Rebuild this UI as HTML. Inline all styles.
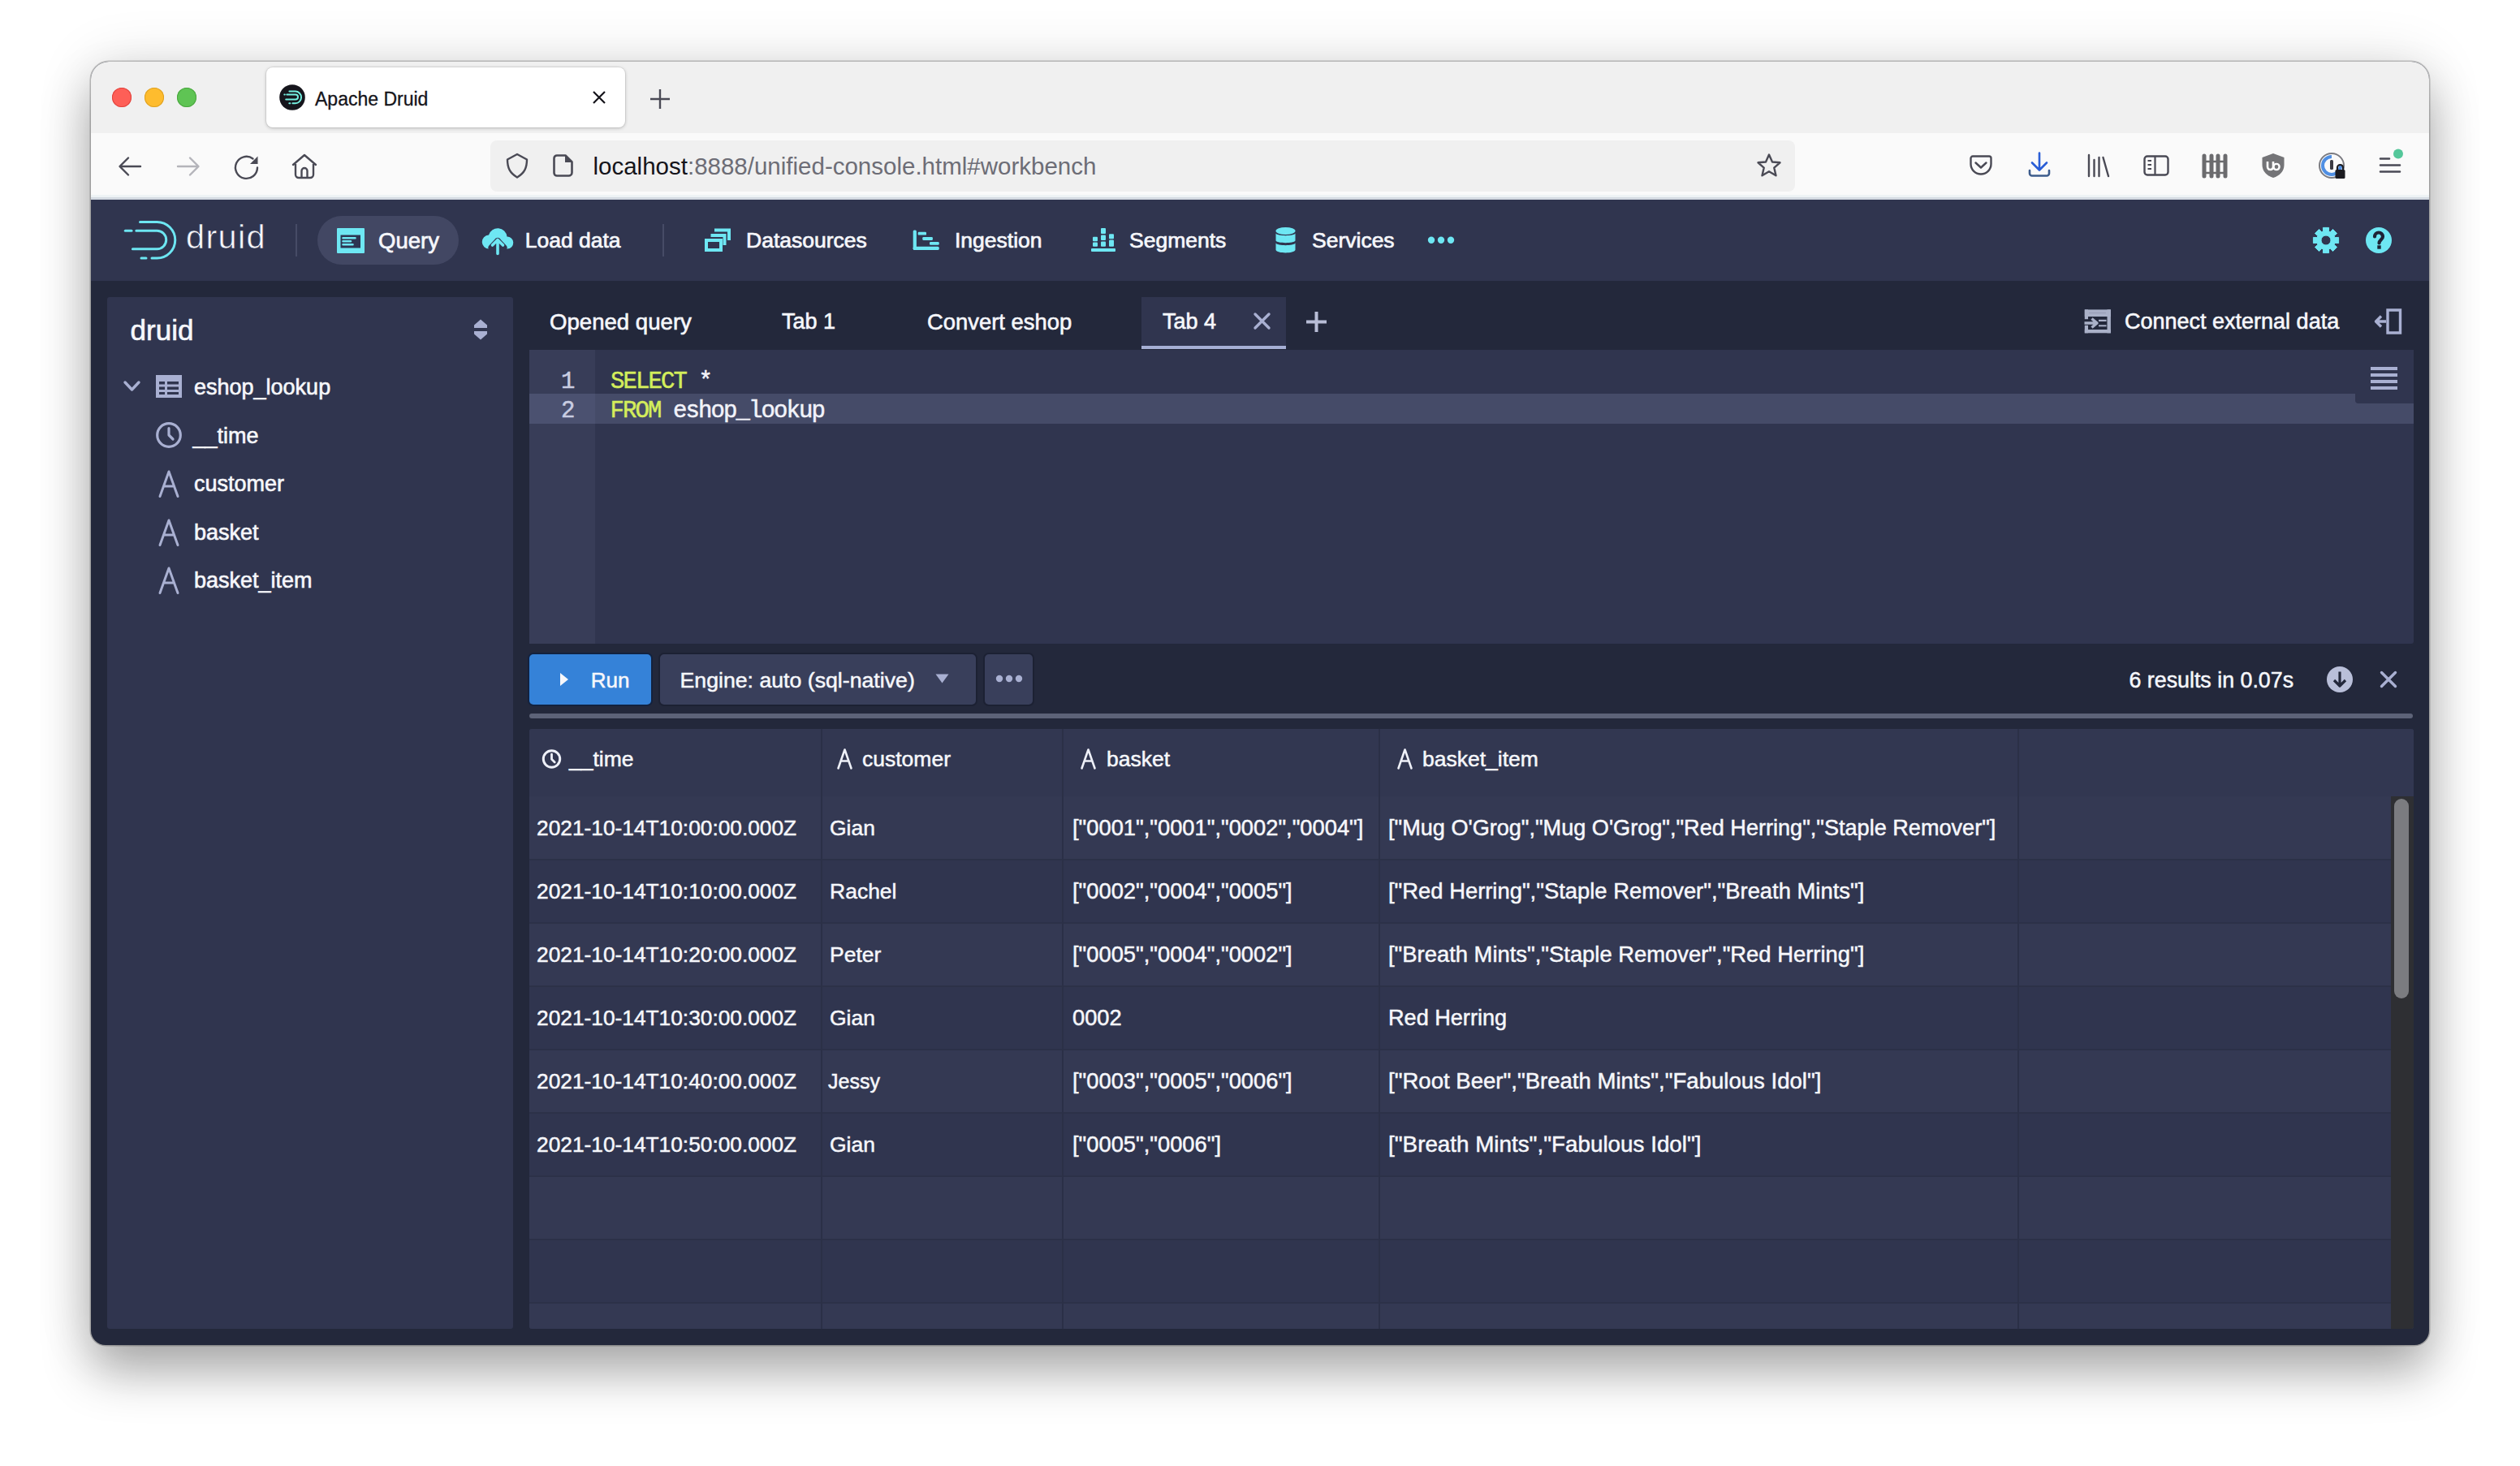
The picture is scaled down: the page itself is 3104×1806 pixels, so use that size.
<!DOCTYPE html>
<html><head><meta charset="utf-8">
<style>
*{box-sizing:border-box;margin:0;padding:0}
html,body{width:3104px;height:1806px;overflow:hidden;background:#ffffff;font-family:"Liberation Sans",sans-serif}
.a{position:absolute}
.t{position:absolute;white-space:nowrap;line-height:1}
svg{position:absolute;overflow:visible}
#win{left:112px;top:76px;width:2880px;height:1581px;border-radius:22px 22px 18px 18px;background:#23283b;overflow:hidden;
 box-shadow:0 0 0 1.5px rgba(0,0,0,.22),0 34px 60px rgba(0,0,0,.30),0 0 70px rgba(0,0,0,.12)}
.nav{font-size:26.5px;color:#f6f7fb;-webkit-text-stroke:0.7px #f6f7fb}
.tab{font-size:27px;color:#f6f7fb;-webkit-text-stroke:0.6px #f6f7fb}
.side{font-size:27px;color:#f6f7fb;-webkit-text-stroke:0.6px #f6f7fb}
.cell{font-size:26.5px;color:#f6f7fb;-webkit-text-stroke:0.5px #f6f7fb}
.mono{font-family:"Liberation Mono",monospace}
</style></head><body>
<div id="win" class="a">
  <div class="a" style="left:0;top:0;width:2880px;height:88px;background:#f0f0f0"></div>
  <div class="a" style="left:0;top:88px;width:2880px;height:80px;background:#fafafa"></div>
  <div class="a" style="left:0;top:164px;width:2880px;height:3px;background:#eef3f5"></div>
  <div class="a" style="left:0;top:167px;width:2880px;height:3px;background:#d4dae2"></div>
  <div class="a" style="left:0;top:170px;width:2880px;height:100px;background:#30354f"></div>
  <div class="a" style="left:20px;top:290px;width:500px;height:1271px;background:#30354f;border-radius:3px"></div>
  <div class="a" style="left:1294px;top:290px;width:178px;height:64px;background:#30354f"></div>
  <div class="a" style="left:1294px;top:350px;width:178px;height:4px;background:#a6afd4"></div>
  <div class="a" style="left:540px;top:355px;width:2321px;height:362px;background:#30354f;border-radius:3px"></div>
  <div class="a" style="left:540px;top:355px;width:81px;height:362px;background:#383d58"></div>
  <div class="a" style="left:540px;top:409px;width:2321px;height:37px;background:#454b68"></div>
  <div class="a" style="left:540px;top:409px;width:81px;height:37px;background:#4b5170"></div>
  <div class="a" style="left:2789px;top:355px;width:72px;height:66px;background:#30354f;border-radius:0 0 0 4px"></div>
  <div class="a" style="left:540px;top:730px;width:150px;height:62px;background:#3582d8;border-radius:5px;box-shadow:0 0 0 2px #13223f"></div>
  <div class="a" style="left:701px;top:730px;width:389px;height:62px;background:#393f5b;border-radius:5px;box-shadow:0 0 0 2px #1c2133"></div>
  <div class="a" style="left:1101px;top:730px;width:59px;height:62px;background:#393f5b;border-radius:5px;box-shadow:0 0 0 2px #1c2133"></div>
  <div class="a" style="left:540px;top:803px;width:2320px;height:6px;background:#5d6378;border-radius:3px"></div>
  <div class="a" style="left:540px;top:822px;width:2321px;height:739px;background:#30354f;border-radius:3px;overflow:hidden">
    <div class="a" style="left:0;top:0;width:2321px;height:83px;background:#323751"></div>
    <div class="a" style="left:0;top:83px;width:2321px;height:77px;background:#343953"></div>
    <div class="a" style="left:0;top:238px;width:2321px;height:78px;background:#343953"></div>
    <div class="a" style="left:0;top:394px;width:2321px;height:78px;background:#343953"></div>
    <div class="a" style="left:0;top:550px;width:2321px;height:78px;background:#343953"></div>
    <div class="a" style="left:0;top:706px;width:2321px;height:78px;background:#343953"></div>
    <div class="a" style="left:0;top:160px;width:2321px;height:2px;background:#2c3148"></div>
    <div class="a" style="left:0;top:238px;width:2321px;height:2px;background:#2c3148"></div>
    <div class="a" style="left:0;top:316px;width:2321px;height:2px;background:#2c3148"></div>
    <div class="a" style="left:0;top:394px;width:2321px;height:2px;background:#2c3148"></div>
    <div class="a" style="left:0;top:472px;width:2321px;height:2px;background:#2c3148"></div>
    <div class="a" style="left:0;top:550px;width:2321px;height:2px;background:#2c3148"></div>
    <div class="a" style="left:0;top:628px;width:2321px;height:2px;background:#2c3148"></div>
    <div class="a" style="left:0;top:706px;width:2321px;height:2px;background:#2c3148"></div>
    <div class="a" style="left:359px;top:0;width:2px;height:739px;background:#2b3047"></div>
    <div class="a" style="left:656px;top:0;width:2px;height:739px;background:#2b3047"></div>
    <div class="a" style="left:1046px;top:0;width:2px;height:739px;background:#2b3047"></div>
    <div class="a" style="left:1833px;top:0;width:2px;height:739px;background:#2b3047"></div>
    <div class="a" style="left:2293px;top:83px;width:28px;height:656px;background:#2e2f33"></div>
    <div class="a" style="left:2297px;top:86px;width:18px;height:246px;background:#7b7c80;border-radius:9px"></div>
  </div>
</div>
<!-- ===== Browser chrome ===== -->
<div class="a" style="left:137.6px;top:107.7px;width:24px;height:24px;border-radius:50%;background:#fe5f57;box-shadow:inset 0 0 0 1px #e0443e"></div>
<div class="a" style="left:177.8px;top:107.7px;width:24px;height:24px;border-radius:50%;background:#febc2e;box-shadow:inset 0 0 0 1px #dea123"></div>
<div class="a" style="left:217.5px;top:107.7px;width:24px;height:24px;border-radius:50%;background:#5fc454;box-shadow:inset 0 0 0 1px #4aa63f"></div>

<div class="a" style="left:328px;top:83px;width:442px;height:74px;border-radius:8px;background:#fff;box-shadow:0 0 0 1px rgba(0,0,0,.06),0 1px 4px rgba(0,0,0,.22)"></div>
<svg style="left:344px;top:104px" width="32" height="32" viewBox="0 0 32 32">
  <circle cx="16" cy="16" r="15.8" fill="#16151c"/>
  <g fill="none" stroke="#74eedf" stroke-width="2" stroke-linecap="round">
  <path d="M12.4 8.6H19.7A7.35 7.35 0 0 1 19.7 23.3H16.4M12.3 23.3H13.3"/>
  <path d="M9.3 12.6H20A3 3 0 0 1 20 18.6H8.2"/>
  <path d="M6.3 12.6H6.8"/>
  </g>
</svg>
<div class="t" style="left:388px;top:110.5px;font-size:23px;color:#15141a;-webkit-text-stroke:0.3px #15141a">Apache Druid</div>
<svg style="left:730px;top:112px" width="16" height="16"><path d="M1 1L15 15M15 1L1 15" stroke="#15141a" stroke-width="2.2"/></svg>
<svg style="left:801px;top:110px" width="24" height="24"><path d="M12 0V24M0 12H24" stroke="#4a4a55" stroke-width="2.4"/></svg>

<!-- nav buttons -->
<svg style="left:146px;top:193px" width="28" height="24" viewBox="0 0 28 24"><path d="M27 12H2M12 1.5L1.5 12L12 22.5" fill="none" stroke="#4a4a55" stroke-width="2.4" stroke-linecap="round" stroke-linejoin="round"/></svg>
<svg style="left:218px;top:193px" width="28" height="24" viewBox="0 0 28 24"><path d="M1 12H26M16 1.5L26.5 12L16 22.5" fill="none" stroke="#b4b4ba" stroke-width="2.4" stroke-linecap="round" stroke-linejoin="round"/></svg>
<svg style="left:289px;top:191px" width="30" height="30" viewBox="0 0 30 30"><path d="M28 15.5A13.5 13.5 0 1 1 22.5 4.5" fill="none" stroke="#4a4a55" stroke-width="2.4" stroke-linecap="round"/><path d="M28.5 1.5V11H19Z" fill="#4a4a55"/></svg>
<svg style="left:359px;top:189px" width="32" height="32" viewBox="0 0 32 32"><path d="M2 14L16 2L30 14M5 11.5V26A4 4 0 0 0 9 30H23A4 4 0 0 0 27 26V11.5M12.5 30V21.5A3.5 3.5 0 0 1 19.5 21.5V30" fill="none" stroke="#4a4a55" stroke-width="2.4" stroke-linejoin="round" stroke-linecap="round"/></svg>

<!-- url bar -->
<div class="a" style="left:604px;top:173px;width:1607px;height:63px;border-radius:8px;background:#f0f0f0"></div>
<svg style="left:622px;top:188px" width="30" height="32" viewBox="0 0 30 32"><path d="M15 2L3 8.5C3 19 6 25 15 30.5C24 25 27 19 27 8.5Z" fill="none" stroke="#4a4a55" stroke-width="2.4" stroke-linejoin="round"/></svg>
<svg style="left:681px;top:190px" width="25" height="28" viewBox="0 0 25 28"><path d="M5 1.5H15.5L23.5 9.5V22.5A4 4 0 0 1 19.5 26.5H5A3.5 3.5 0 0 1 1.5 23V5A3.5 3.5 0 0 1 5 1.5Z" fill="none" stroke="#4a4a55" stroke-width="2.6" stroke-linejoin="round"/><path d="M15 1.5V10H23.5Z" fill="#4a4a55"/></svg>
<div class="t" style="left:730.5px;top:190px;font-size:29.5px;color:#15141a">localhost<span style="color:#6d6d76">:8888/unified-console.html#workbench</span></div>
<svg style="left:2163px;top:188px" width="32" height="32" viewBox="0 0 32 32"><path d="M16 2.5L20 11.5L29.5 12.3L22.3 18.7L24.5 28.3L16 23.2L7.5 28.3L9.7 18.7L2.5 12.3L12 11.5Z" fill="none" stroke="#4a4a55" stroke-width="2.4" stroke-linejoin="round"/></svg>

<!-- right toolbar icons -->
<svg style="left:2426px;top:191px" width="28" height="27" viewBox="0 0 28 27"><path d="M4 1.5H24A2.5 2.5 0 0 1 26.5 4V11A12.5 12.5 0 0 1 1.5 11V4A2.5 2.5 0 0 1 4 1.5Z" fill="none" stroke="#4a4a55" stroke-width="2.4"/><path d="M7.5 9.5L14 15.5L20.5 9.5" fill="none" stroke="#4a4a55" stroke-width="2.4" stroke-linecap="round" stroke-linejoin="round"/></svg>
<svg style="left:2498px;top:187px" width="28" height="32" viewBox="0 0 28 32"><path d="M14 1.5V22M5 13.5L14 22.5L23 13.5" fill="none" stroke="#2a5ed6" stroke-width="2.6" stroke-linecap="round" stroke-linejoin="round"/><path d="M2 23V26.5A3 3 0 0 0 5 29.5H23A3 3 0 0 0 26 26.5V23" fill="none" stroke="#3d5c8c" stroke-width="2.6" stroke-linecap="round"/></svg>
<svg style="left:2571px;top:189px" width="28" height="30" viewBox="0 0 28 30"><path d="M2 2V28M8.5 8V28M14.5 5V28M19.5 5L26 28" fill="none" stroke="#4a4a55" stroke-width="2.4" stroke-linecap="round"/></svg>
<svg style="left:2640px;top:191px" width="32" height="26" viewBox="0 0 32 26"><rect x="1.5" y="1.5" width="29" height="23" rx="3.5" fill="none" stroke="#4a4a55" stroke-width="2.4"/><path d="M14.5 1.5V24.5M5.5 7H10M5.5 12H10M5.5 17H10" fill="none" stroke="#4a4a55" stroke-width="2.2"/></svg>
<svg style="left:2711px;top:189px" width="34" height="30" viewBox="0 0 34 30"><path d="M4 3V28M13 3V28M21 3V28M30 3V28" stroke="#6b6b6e" stroke-width="5" stroke-linecap="round"/><path d="M2 10H32M2 24H32" stroke="#6b6b6e" stroke-width="2.5"/></svg>
<svg style="left:2785px;top:188px" width="30" height="32" viewBox="0 0 30 32"><path d="M15 1L1.5 6V15C1.5 23 7 28.5 15 31C23 28.5 28.5 23 28.5 15V6Z" fill="#747477"/><path d="M8 11V17.5A3.5 3.5 0 0 0 15 17.5V11" fill="none" stroke="#fff" stroke-width="2.6"/><circle cx="19" cy="17.5" r="3.6" fill="none" stroke="#fff" stroke-width="2.4"/></svg>
<svg style="left:2855px;top:187px" width="34" height="34" viewBox="0 0 34 34"><circle cx="17" cy="17" r="15" fill="none" stroke="#7b7b80" stroke-width="2"/><path d="M17 6A11 11 0 1 0 28 17" fill="none" stroke="#4f8fe3" stroke-width="4"/><rect x="15" y="10" width="4" height="12" rx="1.5" fill="#3b3b44"/><rect x="21.5" y="22" width="12" height="11" rx="1.5" fill="#1b1b20"/><path d="M24 22V19.5A3.5 3.5 0 0 1 31 19.5V22" fill="none" stroke="#1b1b20" stroke-width="2.2"/></svg>
<svg style="left:2930px;top:183px" width="34" height="34" viewBox="0 0 34 34"><path d="M2 12.5H13M2 20.5H26M2 28.5H26" stroke="#4a4a55" stroke-width="2.6" stroke-linecap="round"/><circle cx="24" cy="6.5" r="6" fill="#54c79a"/></svg>
<!-- ===== Druid header ===== -->
<svg style="left:140px;top:260px" width="90" height="70" viewBox="0 0 90 70">
  <g fill="none" stroke="#6de6f2" stroke-width="3" stroke-linecap="round">
    <path d="M32.5 13.5H53.5A22.25 22.25 0 0 1 53.5 58H47"/>
    <path d="M34 58H40"/>
    <path d="M27.8 24.2H53.4A11.3 11.3 0 0 1 53.4 46.8H23.4"/>
    <path d="M14.3 24.2H22"/>
  </g>
</svg>
<div class="t" style="left:229px;top:270.8px;font-size:41.5px;color:#f6f7fb;letter-spacing:1.3px;-webkit-text-stroke:0.6px #30354f">druid</div>
<div class="a" style="left:364px;top:276px;width:2px;height:40px;background:#464b66"></div>
<div class="a" style="left:391px;top:266px;width:174px;height:60px;border-radius:30px;background:#424763"></div>
<svg style="left:415px;top:281px" width="34" height="31" viewBox="0 0 34 31"><rect x="4" y="8" width="25.5" height="17" fill="#2c3552"/><path fill="#6ee7f3" fill-rule="evenodd" d="M1 0H33A1 1 0 0 1 34 1V30A1 1 0 0 1 33 31H1A1 1 0 0 1 0 30V1A1 1 0 0 1 1 0ZM4.5 8.5V24.5H29V8.5Z"/><path d="M7.5 12.3H22.5M7.5 16.3H17M7.5 20.3H19.5" stroke="#6ee7f3" stroke-width="2.6" stroke-linecap="round"/></svg>
<div class="t nav" style="left:466px;top:283px;font-size:27.5px">Query</div>
<svg style="left:594px;top:279px" width="38" height="35" viewBox="0 0 38 35"><path fill="#6ee7f3" d="M30.5 12.5A11.5 11.5 0 0 0 8 10.5A8.5 8.5 0 0 0 8.5 27.5H31A7.5 7.5 0 0 0 30.5 12.5Z"/><path d="M19 34V18M11.5 26L19 18L26.5 26" fill="none" stroke="#30354f" stroke-width="8" stroke-linecap="round" stroke-linejoin="round"/><path d="M19 33.5V16.5M12.5 23L19 16.5L25.5 23" fill="none" stroke="#6ee7f3" stroke-width="3.6" stroke-linecap="round" stroke-linejoin="round"/></svg>
<div class="t nav" style="left:646.7px;top:283px">Load data</div>
<div class="a" style="left:816px;top:276px;width:2px;height:40px;background:#464b66"></div>
<svg style="left:866px;top:280px" width="36" height="30" viewBox="0 0 36 30"><g fill="none" stroke="#6ee7f3" stroke-width="4"><path d="M14 3.5H32V16"/><path d="M9.5 10H26.5V22"/><rect x="4" y="16" width="18" height="12"/></g></svg>
<div class="t nav" style="left:919px;top:283px">Datasources</div>
<svg style="left:1122px;top:281px" width="38" height="30" viewBox="0 0 38 30"><g fill="#6ee7f3"><rect x="2.7" y="2.6" width="4.2" height="24.2" rx="1.5"/><rect x="2.7" y="22.7" width="32" height="4.2" rx="1.5"/><rect x="8.7" y="4.8" width="10.3" height="3.8" rx="1.2"/><rect x="14.3" y="11" width="12.6" height="3.9" rx="1.2"/><rect x="23" y="17" width="11.7" height="3.8" rx="1.2"/></g></svg>
<div class="t nav" style="left:1176px;top:283px">Ingestion</div>
<svg style="left:1342px;top:279px" width="34" height="34" viewBox="0 0 34 34"><g fill="#6ee7f3"><rect x="2" y="27" width="30" height="4" rx="1"/><rect x="4" y="12.8" width="6" height="5.5" rx="1"/><rect x="4" y="19.5" width="6" height="5.2" rx="1"/><rect x="14" y="2" width="6" height="7" rx="1"/><rect x="14" y="10.5" width="6" height="6.5" rx="1"/><rect x="14" y="18.5" width="6" height="6.2" rx="1"/><rect x="24" y="9.3" width="6" height="6" rx="1"/><rect x="24" y="16.5" width="6" height="8.2" rx="1"/></g></svg>
<div class="t nav" style="left:1391px;top:283px">Segments</div>
<svg style="left:1570px;top:279px" width="27" height="34" viewBox="0 0 27 34"><g fill="#6ee7f3"><ellipse cx="13.5" cy="5.5" rx="12" ry="4.5"/><path d="M1.5 8.5C3 12 24 12 25.5 8.5V17.5C24 21 3 21 1.5 17.5Z"/><path d="M1.5 20.5C3 24 24 24 25.5 20.5V29C24 33.5 3 33.5 1.5 29Z"/></g></svg>
<div class="t nav" style="left:1616px;top:283px">Services</div>
<svg style="left:1756px;top:288px" width="36" height="16" viewBox="0 0 36 16"><g fill="#6ee7f3"><circle cx="7" cy="7.7" r="4.2"/><circle cx="19" cy="7.7" r="4.2"/><circle cx="31" cy="7.7" r="4.2"/></g></svg>
<svg style="left:2848px;top:279px" width="34" height="34" viewBox="0 0 34 34"><path fill="#6ee7f3" fill-rule="evenodd" stroke="#6ee7f3" stroke-width="1" stroke-linejoin="round" d="M13.64 6.00 L13.40 1.41 L20.60 1.41 L20.36 6.00 L22.40 6.85 L25.48 3.43 L30.57 8.52 L27.15 11.60 L28.00 13.64 L32.59 13.40 L32.59 20.60 L28.00 20.36 L27.15 22.40 L30.57 25.48 L25.48 30.57 L22.40 27.15 L20.36 28.00 L20.60 32.59 L13.40 32.59 L13.64 28.00 L11.60 27.15 L8.52 30.57 L3.43 25.48 L6.85 22.40 L6.00 20.36 L1.41 20.60 L1.41 13.40 L6.00 13.64 L6.85 11.60 L3.43 8.52 L8.52 3.43 L11.60 6.85Z M17 11A6 6 0 1 0 17 23A6 6 0 1 0 17 11Z"/></svg>
<svg style="left:2914px;top:280px" width="32" height="32" viewBox="0 0 32 32"><circle cx="16" cy="16" r="16" fill="#6ee7f3"/><path d="M11 11.5A5 5 0 0 1 21 11.5C21 15 16.5 15.5 16.5 19.5" fill="none" stroke="#1e2336" stroke-width="4.2" stroke-linecap="round"/><rect x="14.3" y="22.3" width="4.4" height="4.4" fill="#1e2336"/></svg>

<!-- ===== Sidebar ===== -->
<div class="t side" style="left:160.6px;top:389px;font-size:35px">druid</div>
<svg style="left:584px;top:393px" width="16" height="26" viewBox="0 0 16 26"><path d="M8 0.5L16 7.5V11H0V7.5Z M0 15H16V18.5L8 25.5L0 18.5Z" fill="#a9b0d2"/></svg>
<svg style="left:152px;top:469px" width="21" height="14" viewBox="0 0 21 14"><path d="M2 2L10.5 11L19 2" fill="none" stroke="#a9b0d2" stroke-width="3.4" stroke-linecap="round" stroke-linejoin="round"/></svg>
<svg style="left:192px;top:462px" width="32" height="28" viewBox="0 0 32 28"><path fill="#a9b0d2" fill-rule="evenodd" d="M0 0H32V28H0ZM4 8V11.5H11V8ZM14 8V11.5H28V8ZM4 14.5V18H11V14.5ZM14 14.5V18H28V14.5ZM4 21V24H11V21ZM14 21V24H28V21Z"/></svg>
<div class="t side" style="left:239px;top:464px">eshop_lookup</div>
<svg style="left:192px;top:520px" width="32" height="32" viewBox="0 0 32 32"><circle cx="16" cy="16" r="14.3" fill="none" stroke="#a9b0d2" stroke-width="3.2"/><path d="M16 7.5V16L21 21" fill="none" stroke="#a9b0d2" stroke-width="3.2" stroke-linecap="round" stroke-linejoin="round"/></svg>
<div class="t side" style="left:237.5px;top:524px">__time</div>
<svg style="left:195px;top:579px" width="26" height="34" viewBox="0 0 26 34"><path d="M2 32.5L13 2L24 32.5M6.5 20H19.5" fill="none" stroke="#a9b0d2" stroke-width="3" stroke-linecap="round" stroke-linejoin="round"/></svg>
<div class="t side" style="left:239px;top:582.7px">customer</div>
<svg style="left:195px;top:639px" width="26" height="34" viewBox="0 0 26 34"><path d="M2 32.5L13 2L24 32.5M6.5 20H19.5" fill="none" stroke="#a9b0d2" stroke-width="3" stroke-linecap="round" stroke-linejoin="round"/></svg>
<div class="t side" style="left:239px;top:642.7px">basket</div>
<svg style="left:195px;top:698px" width="26" height="34" viewBox="0 0 26 34"><path d="M2 32.5L13 2L24 32.5M6.5 20H19.5" fill="none" stroke="#a9b0d2" stroke-width="3" stroke-linecap="round" stroke-linejoin="round"/></svg>
<div class="t side" style="left:239px;top:701.5px">basket_item</div>

<!-- ===== Tabs ===== -->
<div class="t tab" style="left:677px;top:383.2px;font-size:27.6px">Opened query</div>
<div class="t tab" style="left:963px;top:383.2px">Tab 1</div>
<div class="t tab" style="left:1142px;top:383.2px;font-size:27.4px">Convert eshop</div>
<div class="t tab" style="left:1432px;top:383.2px">Tab 4</div>
<svg style="left:1544px;top:385px" width="21" height="21" viewBox="0 0 21 21"><path d="M2 2L19 19M19 2L2 19" stroke="#a9b0d2" stroke-width="3.4" stroke-linecap="round"/></svg>
<svg style="left:1609px;top:384px" width="25" height="25" viewBox="0 0 25 25"><path d="M12.5 0V25M0 12.5H25" stroke="#b8bdd6" stroke-width="4"/></svg>
<svg style="left:2567px;top:381px" width="34" height="30" viewBox="0 0 34 30"><g fill="#aab1c8"><rect x="0.8" y="0.4" width="32.1" height="8.6"/><rect x="28.5" y="0.4" width="4.4" height="28.9"/><rect x="0.8" y="25" width="32.1" height="4.3"/><rect x="0.8" y="0.4" width="4.2" height="11.8"/><rect x="0.8" y="19.8" width="4.2" height="9.5"/><rect x="18" y="12.8" width="9.5" height="2.2"/><rect x="18" y="19.3" width="9.5" height="2"/></g><path d="M0.5 17H13.5M9.5 11.5L16 17L9.5 22.5" fill="none" stroke="#aab1c8" stroke-width="3.4" stroke-linejoin="round"/><rect x="6" y="3.8" width="21" height="1.4" fill="#9aa1b8"/></svg>
<div class="t tab" style="left:2617px;top:383.4px">Connect external data</div>
<svg style="left:2925px;top:380px" width="34" height="32" viewBox="0 0 34 32"><path d="M16 2H31.5V30H16Z" fill="none" stroke="#a9b0d2" stroke-width="3.4"/><path d="M2 16H14M8 9.5L1.5 16L8 22.5" fill="none" stroke="#a9b0d2" stroke-width="3.4" stroke-linejoin="round"/></svg>

<!-- ===== Editor ===== -->
<div class="t mono" style="left:691px;top:455.5px;font-size:29px;color:#c9cde2;letter-spacing:-1.9px;-webkit-text-stroke:0.5px currentColor">1</div>
<div class="t mono" style="left:691px;top:492px;font-size:29px;color:#c9cde2;letter-spacing:-1.9px;-webkit-text-stroke:0.5px currentColor">2</div>
<div class="t mono" style="left:752px;top:455.5px;font-size:29px;color:#d4ee5b;letter-spacing:-1.9px;-webkit-text-stroke:0.5px currentColor">SELECT <span style="color:#f2f3fa">*</span></div>
<div class="t mono" style="left:751.5px;top:492px;font-size:29px;color:#d4ee5b;letter-spacing:-1.9px;-webkit-text-stroke:0.5px currentColor">FROM <span style="color:#f2f3fa">eshop_lookup</span></div>
<svg style="left:2920px;top:451px" width="33" height="30" viewBox="0 0 33 30"><path d="M0 3H33M0 11H33M0 19H33M0 27H33" stroke="#a9b0d2" stroke-width="4"/></svg>

<!-- ===== Run row ===== -->
<svg style="left:689px;top:828px" width="12" height="18" viewBox="0 0 12 18"><path d="M1 1L11 9L1 17Z" fill="#f6f7fb"/></svg>
<div class="t cell" style="left:727.7px;top:824.5px;font-size:26px">Run</div>
<div class="t cell" style="left:837.5px;top:824.5px;font-size:26.7px">Engine: auto (sql-native)</div>
<svg style="left:1152px;top:830px" width="17" height="12" viewBox="0 0 17 12"><path d="M0.5 0.5H16.5L8.5 11.5Z" fill="#a9b0d2"/></svg>
<svg style="left:1226px;top:829px" width="34" height="14" viewBox="0 0 34 14"><g fill="#a9b0d2"><circle cx="5" cy="7" r="4.2"/><circle cx="17" cy="7" r="4.2"/><circle cx="29" cy="7" r="4.2"/></g></svg>
<div class="t cell" style="left:2622.5px;top:824.5px;font-size:26.8px">6 results in 0.07s</div>
<svg style="left:2866px;top:821px" width="32" height="32" viewBox="0 0 32 32"><circle cx="16" cy="16" r="16" fill="#b9bfd9"/><path d="M16 6.5V24M9 17L16 24L23 17" fill="none" stroke="#23283b" stroke-width="3.2" stroke-linejoin="round"/></svg>
<svg style="left:2932px;top:827px" width="20" height="20" viewBox="0 0 20 20"><path d="M1.5 1.5L18.5 18.5M18.5 1.5L1.5 18.5" stroke="#a9b0d2" stroke-width="3.4" stroke-linecap="round"/></svg>
<!-- ===== Table ===== -->
<svg style="left:667px;top:923px" width="25" height="25" viewBox="0 0 25 25"><circle cx="12.5" cy="12" r="10.2" fill="none" stroke="#eef0f8" stroke-width="3"/><path d="M12.5 6.2V12.3L16.2 16" fill="none" stroke="#eef0f8" stroke-width="2.8" stroke-linecap="round" stroke-linejoin="round"/></svg>
<div class="t cell" style="left:701px;top:921.6px">__time</div>
<svg style="left:1031px;top:922px" width="19" height="26" viewBox="0 0 19 26"><path d="M1.5 24.5L9.5 1.5L17.5 24.5M4.8 15.5H14.2" fill="none" stroke="#eef0f8" stroke-width="2.6" stroke-linecap="round" stroke-linejoin="round"/></svg>
<div class="t cell" style="left:1062px;top:921.6px">customer</div>
<svg style="left:1330.5px;top:922px" width="19" height="26" viewBox="0 0 19 26"><path d="M1.5 24.5L9.5 1.5L17.5 24.5M4.8 15.5H14.2" fill="none" stroke="#eef0f8" stroke-width="2.6" stroke-linecap="round" stroke-linejoin="round"/></svg>
<div class="t cell" style="left:1363px;top:921.6px">basket</div>
<svg style="left:1720.5px;top:922px" width="19" height="26" viewBox="0 0 19 26"><path d="M1.5 24.5L9.5 1.5L17.5 24.5M4.8 15.5H14.2" fill="none" stroke="#eef0f8" stroke-width="2.6" stroke-linecap="round" stroke-linejoin="round"/></svg>
<div class="t cell" style="left:1752px;top:921.6px">basket_item</div>
<div class="t cell" style="left:661px;top:1006.8px;font-size:26.3px">2021-10-14T10:00:00.000Z</div>
<div class="t cell" style="left:1022px;top:1006.6px;font-size:26.5px">Gian</div>
<div class="t cell" style="left:1321px;top:1005.9px;font-size:27.3px">["0001","0001","0002","0004"]</div>
<div class="t cell" style="left:1710px;top:1006.1px;font-size:27.1px">["Mug O'Grog","Mug O'Grog","Red Herring","Staple Remover"]</div>
<div class="t cell" style="left:661px;top:1084.8px;font-size:26.3px">2021-10-14T10:10:00.000Z</div>
<div class="t cell" style="left:1022px;top:1084.6px;font-size:26.5px">Rachel</div>
<div class="t cell" style="left:1321px;top:1083.9px;font-size:27.3px">["0002","0004","0005"]</div>
<div class="t cell" style="left:1710px;top:1083.9px;font-size:27.38px">["Red Herring","Staple Remover","Breath Mints"]</div>
<div class="t cell" style="left:661px;top:1162.8px;font-size:26.3px">2021-10-14T10:20:00.000Z</div>
<div class="t cell" style="left:1022px;top:1162.6px;font-size:26.5px">Peter</div>
<div class="t cell" style="left:1321px;top:1161.9px;font-size:27.3px">["0005","0004","0002"]</div>
<div class="t cell" style="left:1710px;top:1161.9px;font-size:27.38px">["Breath Mints","Staple Remover","Red Herring"]</div>
<div class="t cell" style="left:661px;top:1240.8px;font-size:26.3px">2021-10-14T10:30:00.000Z</div>
<div class="t cell" style="left:1022px;top:1240.6px;font-size:26.5px">Gian</div>
<div class="t cell" style="left:1321px;top:1239.9px;font-size:27.3px">0002</div>
<div class="t cell" style="left:1710px;top:1240.1px;font-size:27.1px">Red Herring</div>
<div class="t cell" style="left:661px;top:1318.8px;font-size:26.3px">2021-10-14T10:40:00.000Z</div>
<div class="t cell" style="left:1020px;top:1319.9px;font-size:25px">Jessy</div>
<div class="t cell" style="left:1321px;top:1317.9px;font-size:27.3px">["0003","0005","0006"]</div>
<div class="t cell" style="left:1710px;top:1317.7px;font-size:27.55px">["Root Beer","Breath Mints","Fabulous Idol"]</div>
<div class="t cell" style="left:661px;top:1396.8px;font-size:26.3px">2021-10-14T10:50:00.000Z</div>
<div class="t cell" style="left:1022px;top:1396.6px;font-size:26.5px">Gian</div>
<div class="t cell" style="left:1321px;top:1395.9px;font-size:27.3px">["0005","0006"]</div>
<div class="t cell" style="left:1710px;top:1395.5px;font-size:27.8px">["Breath Mints","Fabulous Idol"]</div>
</body></html>
